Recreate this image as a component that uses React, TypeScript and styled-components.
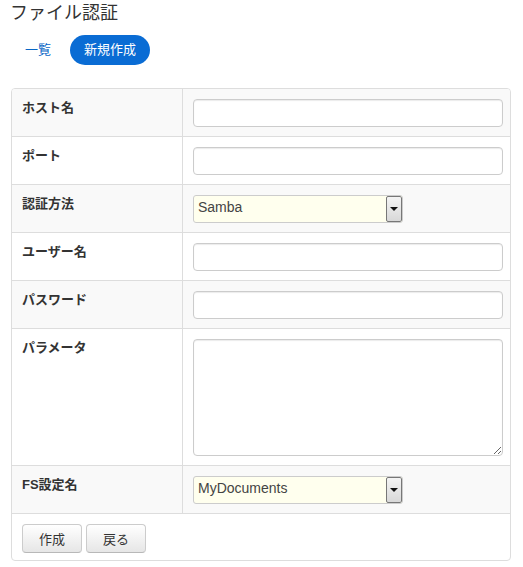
import { createGlobalStyle } from "styled-components"
import styled from "styled-components"

const GlobalStyle = createGlobalStyle`
  body {
    margin: 0;
    background: #fff;
    font-family: "Liberation Sans", "Noto Sans CJK JP", sans-serif;
    font-size: 13px;
    color: #333;
  }
`

const Page = styled.div`
  padding: 0 12px 0 11px;
  width: 500px;
`

const Title = styled.h1`
  margin: 0 0 0 -1px;
  font-size: 18px;
  font-weight: normal;
  line-height: 26px;
  color: #333;
`

const Tabs = styled.ul`
  display: flex;
  gap: 4px;
  list-style: none;
  margin: 9px 0 23px -1px;
  padding: 0;
`

const Tab = styled.li<{ $active?: boolean }>`
  height: 30px;
  line-height: 30px;
  padding: 0 ${p => (p.$active ? "14px" : "15px")};
  border-radius: 15px;
  font-size: 13px;
  color: ${p => (p.$active ? "#fff" : "#0866c6")};
  background: ${p => (p.$active ? "#0a6cd4" : "transparent")};
  cursor: pointer;
`

const Form = styled.form`
  border: 1px solid #ddd;
  border-radius: 4px;
  overflow: hidden;
`

const Table = styled.table`
  width: 100%;
  border-collapse: collapse;
  table-layout: fixed;
`

const Row = styled.tr<{ $striped?: boolean }>`
  background: ${p => (p.$striped ? "#f9f9f9" : "#fff")};
`

const Label = styled.th`
  width: 160px;
  padding: 10px 0 9px 10px;
  text-align: left;
  vertical-align: top;
  font-weight: bold;
  font-size: 13px;
  line-height: 18px;
  color: #333;
  border-right: 1px solid #ddd;
  border-bottom: 1px solid #ddd;
`

const Field = styled.td`
  padding: 10px 9px 9px 10px;
  vertical-align: top;
  border-bottom: 1px solid #ddd;
`

const TextInput = styled.input`
  display: block;
  box-sizing: border-box;
  width: 310px;
  height: 28px;
  border: 1px solid #ccc;
  border-radius: 4px;
  box-shadow: inset 0 1px 1px rgba(0, 0, 0, 0.08);
  background: #fff;
  padding: 4px 6px;
  font: inherit;
`

const TextArea = styled.textarea`
  display: block;
  box-sizing: border-box;
  width: 310px;
  height: 117px;
  border: 1px solid #ccc;
  border-radius: 4px;
  box-shadow: inset 0 1px 1px rgba(0, 0, 0, 0.08);
  padding: 4px 6px;
  font: inherit;
  resize: both;
`

const SelectBox = styled.div`
  display: flex;
  box-sizing: border-box;
  width: 210px;
  height: 28px;
  border: 1px solid #ccc;
  border-radius: 3px;
  background: #ffffee;
  overflow: hidden;
`

const SelectValue = styled.select`
  flex: 1;
  min-width: 0;
  appearance: none;
  border: none;
  outline: none;
  background: transparent;
  padding: 0 0 4px 4px;
  font-family: "Liberation Sans", Arial, sans-serif;
  font-size: 14px;
  color: #444;
`

const SelectArrow = styled.div`
  box-sizing: border-box;
  width: 16px;
  border: 1px solid #777;
  border-radius: 2px;
  background: linear-gradient(#f4f4f4, #d8d8d8);
  display: flex;
  align-items: center;
  justify-content: center;
  &::after {
    content: "";
    border-left: 4px solid transparent;
    border-right: 4px solid transparent;
    border-top: 4px solid #111;
  }
`

const Actions = styled.div`
  display: flex;
  gap: 4px;
  padding: 10px 10px 7px 10px;
`

const Button = styled.button`
  width: 60px;
  height: 29px;
  border: 1px solid #ccc;
  border-bottom-color: #b8b8b8;
  border-radius: 4px;
  background: linear-gradient(#ffffff, #e6e6e6);
  font: inherit;
  font-size: 13px;
  color: #333;
  cursor: pointer;
`

function Select({ value }: { value: string }) {
  return (
    <SelectBox>
      <SelectValue defaultValue={value}>
        <option>{value}</option>
      </SelectValue>
      <SelectArrow />
    </SelectBox>
  )
}

export default function App() {
  return (
    <Page>
      <GlobalStyle />
      <Title>ファイル認証</Title>
      <Tabs>
        <Tab>一覧</Tab>
        <Tab $active>新規作成</Tab>
      </Tabs>
      <Form onSubmit={e => e.preventDefault()}>
        <Table>
          <tbody>
            <Row $striped>
              <Label>ホスト名</Label>
              <Field><TextInput /></Field>
            </Row>
            <Row>
              <Label>ポート</Label>
              <Field><TextInput /></Field>
            </Row>
            <Row $striped>
              <Label>認証方法</Label>
              <Field><Select value="Samba" /></Field>
            </Row>
            <Row>
              <Label>ユーザー名</Label>
              <Field><TextInput /></Field>
            </Row>
            <Row $striped>
              <Label>パスワード</Label>
              <Field><TextInput type="password" /></Field>
            </Row>
            <Row>
              <Label>パラメータ</Label>
              <Field><TextArea /></Field>
            </Row>
            <Row $striped>
              <Label>FS設定名</Label>
              <Field><Select value="MyDocuments" /></Field>
            </Row>
          </tbody>
        </Table>
        <Actions>
          <Button type="submit">作成</Button>
          <Button type="button">戻る</Button>
        </Actions>
      </Form>
    </Page>
  )
}
